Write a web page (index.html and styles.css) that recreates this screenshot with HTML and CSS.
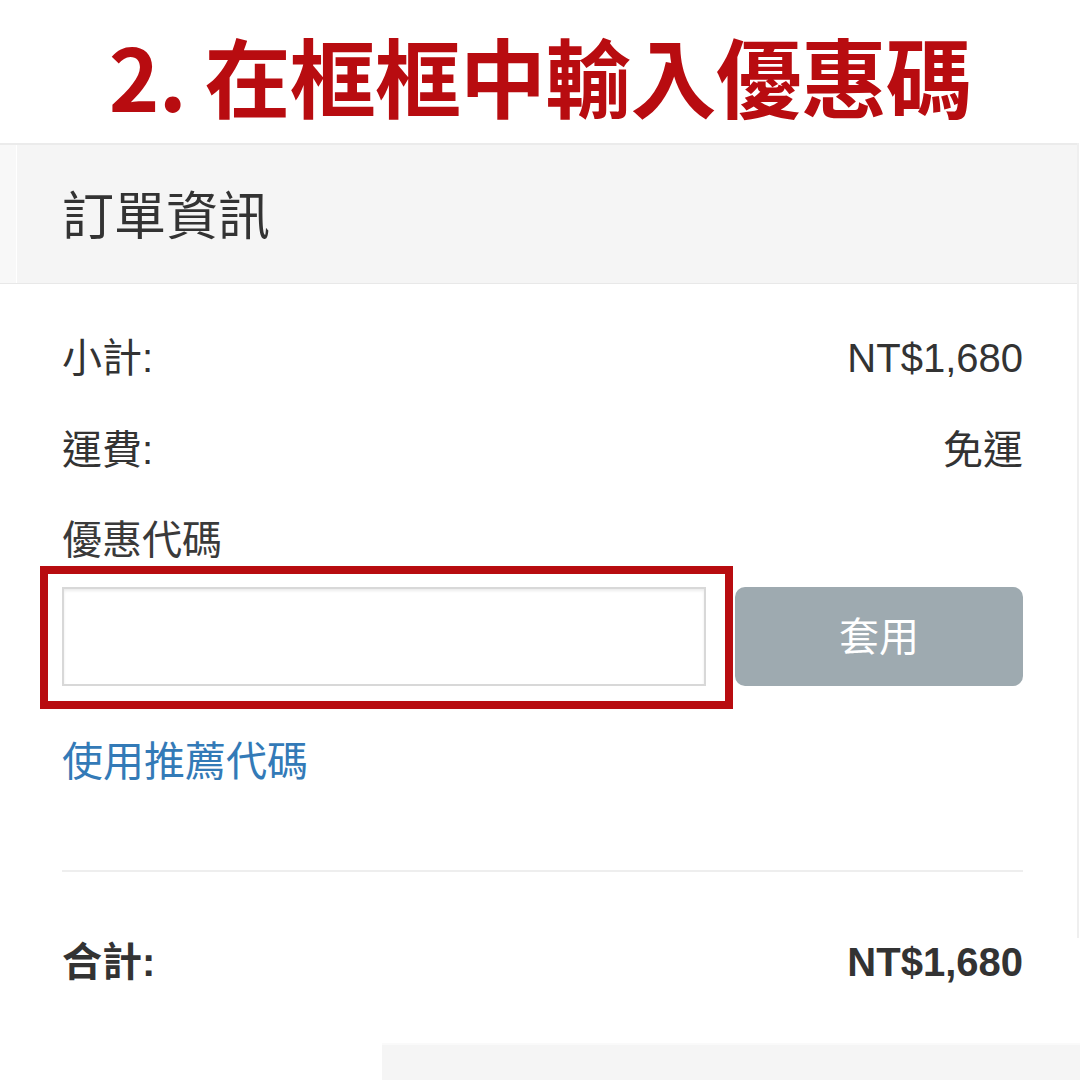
FILE: index.html
```html
<!DOCTYPE html>
<html lang="zh-Hant">
<head>
<meta charset="utf-8">
<title>在框框中輸入優惠碼</title>
<link rel="stylesheet" href="styles.css">
</head>
<body>
<div class="page">
  <h1 class="title">2. 在框框中輸入優惠碼</h1>
  <div class="panel">
    <div class="panel-head">訂單資訊</div>
    <div class="panel-body">
      <div class="row"><span>小計:</span><span>NT$1,680</span></div>
      <div class="row row-ship"><span>運費:</span><span>免運</span></div>
      <div class="coupon-label">優惠代碼</div>
      <div class="coupon">
        <input class="coupon-input" type="text" aria-label="優惠代碼">
        <button class="coupon-btn" type="button">套用</button>
        <div class="highlight"></div>
      </div>
      <a class="ref-link" href="#">使用推薦代碼</a>
      <div class="divider"></div>
    </div>
  </div>
  <div class="total"><span>合計:</span><span>NT$1,680</span></div>
  <div class="next-block"></div>
</div>
</body>
</html>
```
FILE: styles.css
```css
* { box-sizing: border-box; }
html, body { margin: 0; padding: 0; background: #fff; }
body {
  width: 1080px;
  height: 1080px;
  overflow: hidden;
  font-family: "Liberation Sans", "Noto Sans CJK TC", sans-serif;
  color: #333;
}
.page { width: 1080px; }
.title {
  margin: 0;
  padding-top: 32px;
  height: 143px;
  text-align: center;
  font-family: "Noto Sans CJK TC", sans-serif;
  font-weight: 700;
  font-size: 86px;
  line-height: 86px;
  color: #b80c10;
  letter-spacing: -0.8px;
}
.panel {
  width: 1079px;
  border-right: 2px solid #efefef;
}
.panel-head {
  height: 141px;
  border-top: 2px solid #ebebeb;
  border-bottom: 1px solid #e8e8e8;
  background: linear-gradient(to right, #f8f8f8 16px, #ffffff 16px, #ffffff 17px, #f5f5f5 17px);
  padding: 42px 0 0 62px;
  font-family: "Noto Sans CJK TC", sans-serif;
  font-size: 52px;
  line-height: 52px;
  color: #333;
}
.panel-body {
  padding: 50px 54px 66px 62px;
}
.row {
  display: flex;
  justify-content: space-between;
  font-size: 40px;
  line-height: 48px;
}
.row-ship { margin-top: 44px; }
.coupon-label {
  margin-top: 42px;
  font-size: 40px;
  line-height: 48px;
  color: #3a3a3a;
}
.coupon {
  position: relative;
  margin-top: 23px;
  display: flex;
  gap: 29px;
  height: 99px;
}
.coupon-input {
  width: 644px;
  height: 99px;
  margin: 0;
  border: 2px solid #d8d8d8;
  background: #fff;
  box-shadow: inset 0 2px 3px rgba(0, 0, 0, 0.08);
  outline: none;
}
.coupon-btn {
  flex: 1;
  height: 99px;
  margin: 0;
  border: none;
  border-radius: 10px;
  background: #9eaab0;
  color: #fff;
  font-family: "Liberation Sans", "Noto Sans CJK TC", sans-serif;
  font-size: 40px;
  line-height: 48px;
  padding: 0;
}
.highlight {
  position: absolute;
  left: -22px;
  top: -21px;
  width: 693px;
  height: 143px;
  border: 8px solid #b80c10;
  pointer-events: none;
}
.ref-link {
  display: block;
  margin-top: 52px;
  font-size: 41px;
  line-height: 48px;
  color: #337ab7;
  text-decoration: none;
}
.divider {
  margin-top: 84px;
  height: 2px;
  background: #eeeeee;
}
.total {
  display: flex;
  justify-content: space-between;
  padding: 0 57px 0 62px;
  font-size: 40px;
  line-height: 48px;
  font-weight: 700;
}
.next-block {
  margin-top: 57px;
  margin-left: 382px;
  height: 60px;
  background: #f5f5f5;
  border-top: 2px solid #fafafa;
}
```
